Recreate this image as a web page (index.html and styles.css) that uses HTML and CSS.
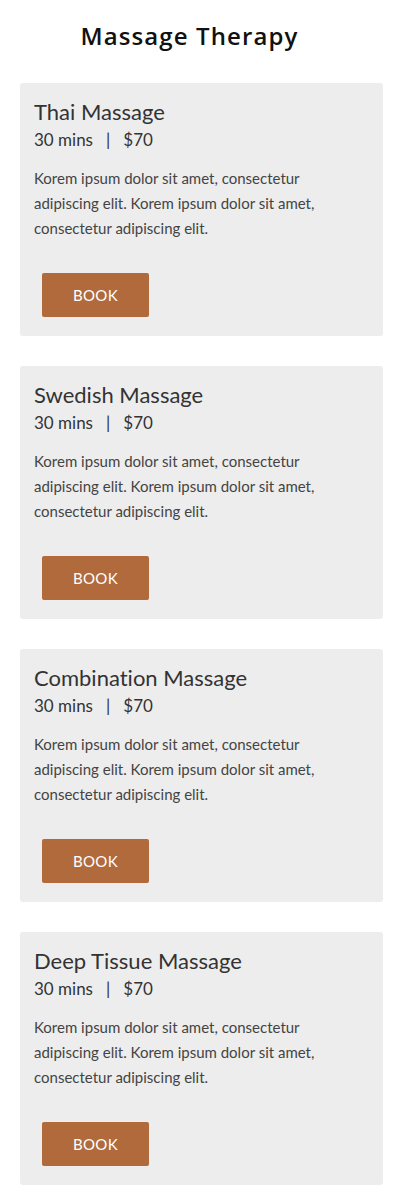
FILE: index.html
```html
<!DOCTYPE html>
<html>
<head>
<meta charset="utf-8">
<link rel="stylesheet" href="styles.css">
</head>
<body>
<div class="page">
  <h1 class="page-title">Massage Therapy</h1>
  <div class="cards">
    <div class="card">
      <h2 class="card-title">Thai Massage</h2>
      <p class="card-meta">30 mins &nbsp; | &nbsp; $70</p>
      <p class="card-text">Korem ipsum dolor sit amet, consectetur adipiscing elit. Korem ipsum dolor sit amet, consectetur adipiscing elit.</p>
      <a class="btn">BOOK</a>
    </div>
    <div class="card">
      <h2 class="card-title">Swedish Massage</h2>
      <p class="card-meta">30 mins &nbsp; | &nbsp; $70</p>
      <p class="card-text">Korem ipsum dolor sit amet, consectetur adipiscing elit. Korem ipsum dolor sit amet, consectetur adipiscing elit.</p>
      <a class="btn">BOOK</a>
    </div>
    <div class="card">
      <h2 class="card-title">Combination Massage</h2>
      <p class="card-meta">30 mins &nbsp; | &nbsp; $70</p>
      <p class="card-text">Korem ipsum dolor sit amet, consectetur adipiscing elit. Korem ipsum dolor sit amet, consectetur adipiscing elit.</p>
      <a class="btn">BOOK</a>
    </div>
    <div class="card">
      <h2 class="card-title">Deep Tissue Massage</h2>
      <p class="card-meta">30 mins &nbsp; | &nbsp; $70</p>
      <p class="card-text">Korem ipsum dolor sit amet, consectetur adipiscing elit. Korem ipsum dolor sit amet, consectetur adipiscing elit.</p>
      <a class="btn">BOOK</a>
    </div>
  </div>
</div>
</body>
</html>
```
FILE: styles.css
```css
* { box-sizing: border-box; }
html, body { margin: 0; padding: 0; background: #fff; }
body {
  font-family: Lato, "Open Sans", sans-serif;
  color: #333;
  font-variant-ligatures: none;
}
.page { padding: 0 29px 18px 20px; }
.page-title {
  margin: 0;
  padding: 20px 24px 0 0;
  height: 83px;
  text-align: center;
  font-family: "Open Sans", sans-serif;
  font-size: 24px;
  font-weight: 600;
  letter-spacing: 1.1px;
  color: #111;
  line-height: 32px;
}
.cards { display: flex; flex-direction: column; gap: 30px; }
.card {
  background: #ededed;
  border-radius: 3px;
  height: 253px;
  padding: 15px 14px 0 14px;
}
.card-title {
  margin: 0;
  font-size: 22px;
  font-weight: 400;
  line-height: 28px;
  color: #333;
}
.card-meta {
  margin: 3px 0 0;
  font-size: 17px;
  line-height: 22px;
  color: #333;
}
.card-text {
  margin: 15px 0 0;
  font-size: 15px;
  line-height: 25px;
  color: #444;
  max-width: 300px;
}
.btn {
  display: flex;
  align-items: center;
  justify-content: center;
  width: 107px;
  height: 44px;
  margin: 32px 0 0 8px;
  background: #b06a3c;
  color: #fff;
  border-radius: 2px;
  font-size: 15px;
  letter-spacing: 0.3px;
}
```
